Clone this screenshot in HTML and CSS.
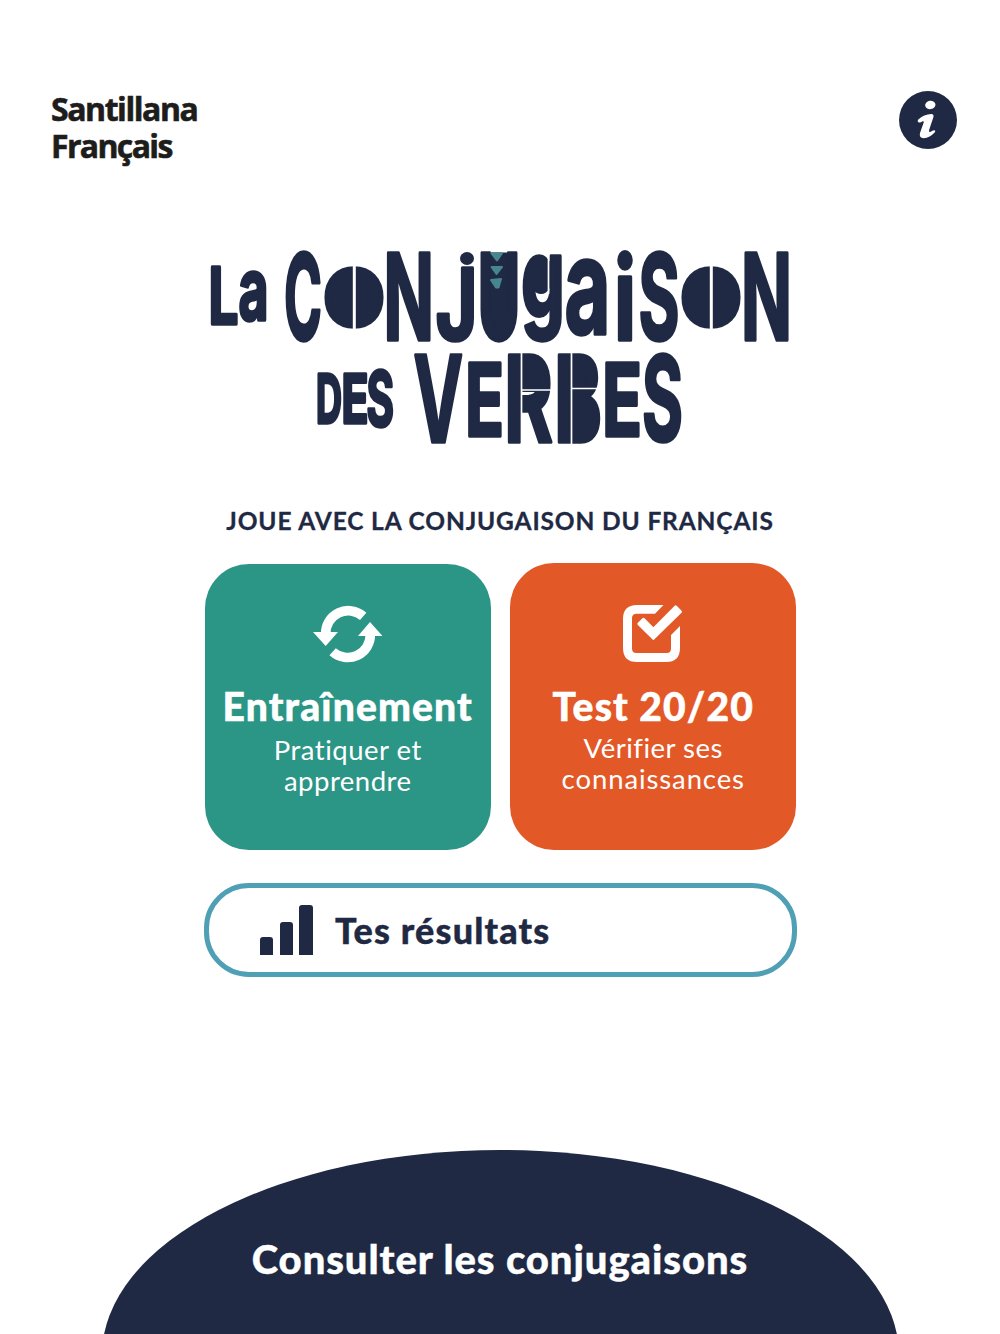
FILE: index.html
```html
<!DOCTYPE html>
<html lang="fr">
<head>
<meta charset="utf-8">
<title>La conjugaison des verbes</title>
<link rel="stylesheet" href="styles.css">
</head>
<body>
<div class="page">
  <header class="header">
    <div class="brand"><span class="brand-a">Santillana</span><br><span class="brand-b">Français</span></div>
    <svg class="info" viewBox="0 0 58 58" width="58" height="58" aria-label="Informations">
      <circle cx="29" cy="29" r="29" fill="#1f2943"/>
      <ellipse cx="31.300" cy="14" rx="5.200" ry="4.200" transform="rotate(-10 31 14)" fill="#fff"/>
      <path d="M19 28.700Q25 23.500 32.300 23.100Q35.300 23.200 34.300 26.500L30.200 38.800Q29.500 41.500 31.300 40.900Q33.500 39.600 35.200 39.200Q36.900 39.300 35.800 41.300Q31 46.800 24.600 47.200Q19.700 46.900 21 42L24.700 31.600Q25.200 29.900 23.600 30.200Q21.500 31.900 19.700 31.500Q18 30.500 19 28.700Z" fill="#fff"/>
    </svg>
  </header>
  <main class="main">
    <h1 class="title">
      <svg viewBox="200 240 600 210" width="600" height="210">
        <g fill="#1f2943">
          <ellipse cx="354" cy="297" rx="21" ry="25"/>
          <ellipse cx="711" cy="297" rx="21" ry="25"/>
          <path d="M488 252.500H511V320Q500 334 488 320Z"/>
          <ellipse cx="467" cy="258.500" rx="7" ry="6.500"/>
          <ellipse cx="541" cy="275" rx="12" ry="19"/>
          <rect x="520" y="361" width="22" height="31" rx="4"/>
          <rect x="570" y="361" width="20" height="31" rx="4"/>
          <rect x="570" y="395" width="22" height="42" rx="4"/>
        </g>
        <text class="letters"><tspan x="208.500" y="324" font-size="78" textLength="30" lengthAdjust="spacingAndGlyphs">L</tspan><tspan x="238.500" y="320" font-size="87" textLength="30" lengthAdjust="spacingAndGlyphs">a</tspan></text>
        <text class="letters"><tspan x="284" y="339.500" font-size="119" textLength="38" lengthAdjust="spacingAndGlyphs">C</tspan><tspan x="322.500" y="325.500" font-size="79" textLength="63" lengthAdjust="spacingAndGlyphs">O</tspan><tspan x="383.500" y="339.500" font-size="120" textLength="50.500" lengthAdjust="spacingAndGlyphs">N</tspan><tspan x="435.500" y="339.500" font-size="99" textLength="42" lengthAdjust="spacingAndGlyphs">J</tspan><tspan x="477.500" y="339.500" font-size="119" textLength="43" lengthAdjust="spacingAndGlyphs">U</tspan><tspan x="521" y="317" font-size="111" textLength="44" lengthAdjust="spacingAndGlyphs">g</tspan><tspan x="564.500" y="333.500" font-size="134" textLength="46" lengthAdjust="spacingAndGlyphs">a</tspan><tspan x="614" y="339.500" font-size="115" textLength="22" lengthAdjust="spacingAndGlyphs">i</tspan><tspan x="638.500" y="339.500" font-size="119" textLength="41" lengthAdjust="spacingAndGlyphs">S</tspan><tspan x="679.500" y="325.500" font-size="79" textLength="63" lengthAdjust="spacingAndGlyphs">O</tspan><tspan x="741" y="339.500" font-size="120" textLength="51" lengthAdjust="spacingAndGlyphs">N</tspan></text>
        <text class="letters"><tspan x="316" y="422.500" font-size="67" textLength="26" lengthAdjust="spacingAndGlyphs">D</tspan><tspan x="341.500" y="422.500" font-size="67" textLength="27" lengthAdjust="spacingAndGlyphs">E</tspan><tspan x="366.500" y="425.500" font-size="75" textLength="27.500" lengthAdjust="spacingAndGlyphs">S</tspan></text>
        <text class="letters"><tspan x="413.500" y="442" font-size="119" textLength="49.500" lengthAdjust="spacingAndGlyphs">V</tspan><tspan x="465" y="435.500" font-size="101" textLength="39" lengthAdjust="spacingAndGlyphs">E</tspan><tspan x="504" y="442" font-size="119" textLength="49" lengthAdjust="spacingAndGlyphs">R</tspan><tspan x="554" y="442" font-size="119" textLength="48" lengthAdjust="spacingAndGlyphs">B</tspan><tspan x="602" y="435.500" font-size="101" textLength="40" lengthAdjust="spacingAndGlyphs">E</tspan><tspan x="642" y="441" font-size="118" textLength="41" lengthAdjust="spacingAndGlyphs">S</tspan></text>
        <path d="M354.300 264V330M711.300 264V330" stroke="#fff" stroke-width="3"/>
        <path d="M521.500 350V446M571.500 350V446M522 390H554M572 388.500H604M548.500 252V294" stroke="#fff" stroke-width="1.700"/>
        <g fill="#46868c" stroke="#46868c" stroke-width="2" stroke-linejoin="round">
          <path d="M491.500 253.300H502L497 260.500Z"/>
          <path d="M491.500 267H502L496.500 274Z"/>
          <path d="M491 280L501 279L498.500 287.500H496Z"/>
        </g>
      </svg>
    </h1>
    <p class="tagline"><span>JOUE AVEC LA CONJUGAISON DU FRANÇAIS</span></p>
    <div class="cards">
      <section class="card card-train">
        <svg class="card-icon" viewBox="0 0 70 58" width="70" height="58">
          <g fill="none" stroke="#fff" stroke-width="9.600">
            <path d="M12.700 29A22.600 22.600 0 0 1 50.200 11.300"/>
            <path d="M57.300 29A22.600 22.600 0 0 1 19.600 46.700"/>
          </g>
          <path d="M0 27H25L12.700 41ZM45 31L57 17L69.500 31Z" fill="#fff"/>
        </svg>
        <h2>Entraînement</h2>
        <p><span class="l1">Pratiquer et</span><br><span class="l2">apprendre</span></p>
      </section>
      <section class="card card-test">
        <svg class="card-icon" viewBox="0 0 70 58" width="70" height="58">
          <path d="M45.500 0L37 8.800H18.500Q14 8.800 14 13.300V43.500Q14 48 18.500 48H48.500Q53 48 53 43.500V30L62 21V43Q62 57 48 57H19Q5 57 5 43V14Q5 0 19 0Z" fill="#fff"/>
          <path d="M25.500 14.300L35.400 24.200L57.700 1.900L62.500 6.700L35.400 33.300L20.900 18.900Z" fill="#fff" stroke="#fff" stroke-width="3" stroke-linejoin="round"/>
        </svg>
        <h2>Test 20/20</h2>
        <p><span class="l1">Vérifier ses</span><br><span class="l2">connaissances</span></p>
      </section>
    </div>
    <section class="results">
      <svg viewBox="0 0 53 50" width="53" height="50" fill="#1f2943">
        <path d="M0 50V35Q0 32 3 32H10Q13 32 13 35V50ZM20 50V20Q20 17 23 17H30Q33 17 33 20V50ZM39 50V3Q39 0 42 0H50Q53 0 53 3V50Z"/>
      </svg>
      <span class="results-label">Tes résultats</span>
    </section>
  </main>
  <footer class="footer">
    <span class="consult">Consulter les conjugaisons</span>
  </footer>
</div>
</body>
</html>
```
FILE: styles.css
```css
* { box-sizing: border-box; }
body { margin: 0; background: #fff; color: #1f2943; font-family: Lato, sans-serif; }
h1, h2, p { margin: 0; }
svg { display: block; overflow: visible; }
.page { height: 1334px; overflow: hidden; display: flex; flex-direction: column; }
.header { flex: none; height: 240px; padding: 91px 43px 0 51px; display: flex; justify-content: space-between; align-items: flex-start; }
.brand { font: 700 32px/36.5px "Open Sans", sans-serif; color: #1d1d1b; letter-spacing: -1.450px; -webkit-text-stroke: .6px #1d1d1b; }
.brand-b { letter-spacing: -1.650px; }
.main { flex: none; display: flex; flex-direction: column; align-items: center; }
.title { width: 600px; height: 210px; }
.letters { font-family: Inter, sans-serif; font-weight: 700; fill: #1f2943; stroke: #1f2943; stroke-width: 3.500px; stroke-linejoin: round; }
.tagline { height: 113px; padding-top: 56px; font-size: 24.500px; line-height: 30px; font-weight: 700; letter-spacing: .86px; white-space: nowrap; -webkit-text-stroke: .3px #1f2943; }
.cards { display: flex; align-items: flex-end; gap: 19.500px; margin-left: 1px; }
.card { width: 286px; height: 287px; border-radius: 44px; padding-top: 42px; color: #fff; display: flex; flex-direction: column; align-items: center; text-align: center; }
.card-train { height: 286px; background: #2b9586; padding-top: 41px; }
.card-test { background: #e35827; }
.card h2 { margin-top: 19px; font-size: 39px; line-height: 48px; font-weight: 900; letter-spacing: 1.150px; white-space: nowrap; -webkit-text-stroke: .5px #fff; }
.card p { margin-top: 4px; font-size: 27.500px; line-height: 31px; font-weight: 400; letter-spacing: .5px; }
.card-test p { margin-top: 2px; }
.card-test .l2 { letter-spacing: .9px; }
.results { width: 593px; height: 94px; margin: 33px 0 0 1px; border: 5px solid #4f9fb5; border-radius: 45px; padding-left: 51px; display: flex; align-items: center; gap: 22px; }
.results-label { font-size: 36px; line-height: 44px; font-weight: 900; letter-spacing: 1.150px; -webkit-text-stroke: .4px #1f2943; }
.footer { width: 797px; height: 410px; flex: none; margin: 173px auto 0; border-radius: 50%; background: #1f2943; color: #fff; padding-top: 85px; text-align: center; }
.consult { font-size: 40px; line-height: 48px; font-weight: 900; letter-spacing: .930px; white-space: nowrap; -webkit-text-stroke: .4px #fff; }
```
